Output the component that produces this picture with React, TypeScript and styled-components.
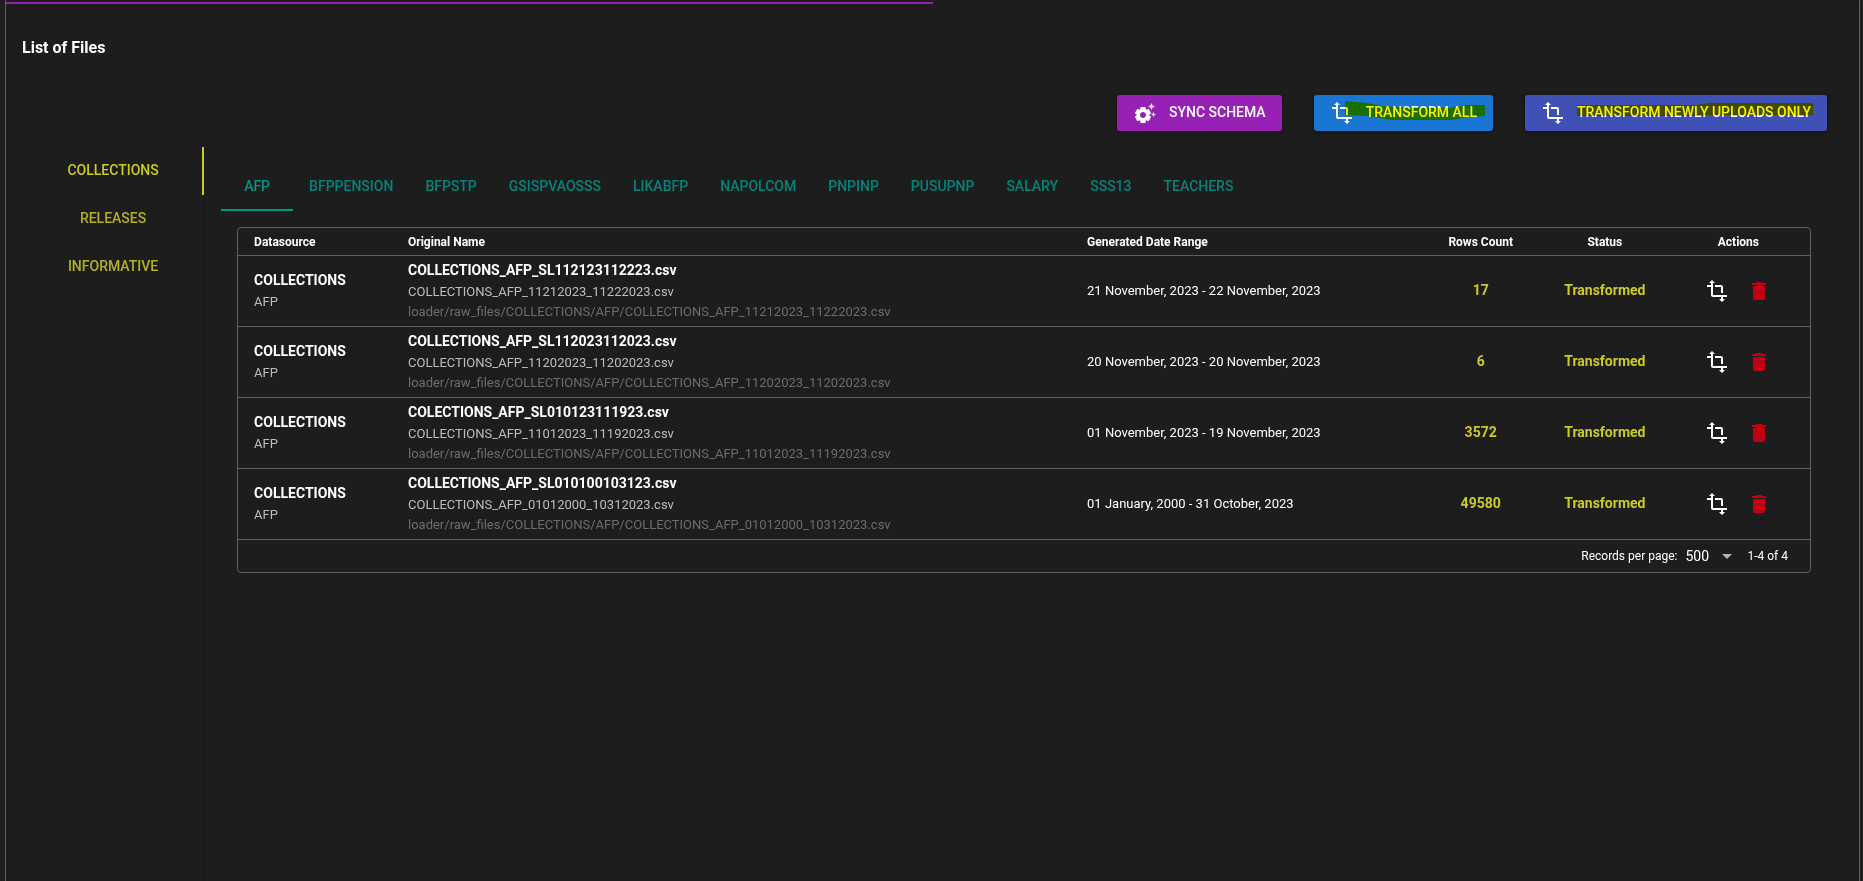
import React, { useState } from 'react';
import styled, { createGlobalStyle, css } from 'styled-components';
import { MdArrowDropDown, MdDelete, MdSettingsSuggest, MdTransform } from 'react-icons/md';

const line = '#5e5e5e';
const lime = '#cbcb22';
const teal = '#009688';

const GlobalStyle = createGlobalStyle`
  *, *::before, *::after { box-sizing: border-box; }
  body {
    margin: 0;
    background: #202020;
    color: #fff;
    font-family: Roboto, 'Liberation Sans', sans-serif;
    font-size: 14px;
    line-height: 20px;
  }
  button, select { font: inherit; color: inherit; background: none; border: 0; margin: 0; padding: 0; cursor: pointer; }
`;

const Card = styled.main`
  display: flex;
  flex-direction: column;
  min-height: 100vh;
  margin: 0 3px 0 5px;
  padding-top: 2px;
  background: #1d1d1d;
  border: solid ${line};
  border-width: 0 1px;
`;

const Progress = styled.div`
  height: 2px;
  background: #1a1a1a;
`;

const ProgressFill = styled.div`
  width: 50%;
  height: 2px;
  background: #9720b5;
`;

const Title = styled.h1`
  margin: 32px 16px 0;
  font-size: 16px;
  line-height: 24px;
  font-weight: 700;
`;

const Toolbar = styled.div`
  display: flex;
  flex-wrap: wrap;
  justify-content: flex-end;
  gap: 16px 32px;
  padding: 35px 32px 16px;
`;

const ToolButton = styled.button<{ $color: string }>`
  display: inline-flex;
  align-items: center;
  gap: 12px;
  height: 36px;
  padding: 0 16px;
  border-radius: 3px;
  background: ${p => p.$color};
  font-weight: 500;
  text-transform: uppercase;
  box-shadow: 0 1px 4px rgba(0, 0, 0, 0.4);
  svg { flex: none; }
`;

const ButtonLabel = styled.span`
  position: relative;
  padding-bottom: 2px;
`;

const Marker = styled.svg`
  position: absolute;
  top: -1px;
  left: -24px;
  mix-blend-mode: multiply;
  pointer-events: none;
  fill: #ffef00;
`;

const Body = styled.div`
  flex: 1;
  display: flex;
  padding: 0 16px;
`;

const SideTabs = styled.nav`
  flex: 0 0 10%;
  border-right: 1px solid #191919;
  box-sizing: content-box;
`;

const tabBase = css<{ $active: boolean }>`
  height: 48px;
  font-weight: 500;
  text-transform: uppercase;
  opacity: ${p => (p.$active ? 1 : 0.85)};
`;

const SideTab = styled.button<{ $active: boolean }>`
  ${tabBase}
  display: block;
  width: 100%;
  padding-bottom: 2px;
  color: ${lime};
  box-shadow: ${p => (p.$active ? `inset -2px 0 ${lime}` : 'none')};
`;

const Panel = styled.section`
  flex: 1;
  min-width: 0;
  padding: 16px;
`;

const TopTabs = styled.nav`
  display: flex;
  overflow: hidden;
`;

const TopTab = styled.button<{ $active: boolean }>`
  ${tabBase}
  min-width: 72px;
  padding: 0 16px 2px;
  color: ${teal};
  box-shadow: ${p => (p.$active ? `inset 0 -2px ${teal}` : 'none')};
`;

const TableCard = styled.div`
  margin: 16px;
  border: 1px solid ${line};
  border-radius: 4px;
`;

const Table = styled.table`
  width: 100%;
  table-layout: fixed;
  border-collapse: separate;
  border-spacing: 0;
`;

const Col = styled.col<{ $width: number }>`
  width: ${p => p.$width}%;
`;

const cell = css<{ $center?: boolean }>`
  padding: 0 8px;
  border-bottom: 1px solid ${line};
  text-align: ${p => (p.$center ? 'center' : 'left')};
  &:first-child { padding-left: 16px; }
  &:last-child { padding-right: 16px; }
`;

const Th = styled.th<{ $center?: boolean }>`
  ${cell}
  height: 28px;
  font-size: 12px;
  font-weight: 700;
`;

const Td = styled.td<{ $center?: boolean }>`
  ${cell}
  height: 71px;
`;

const Strong = styled.div`
  padding-bottom: 2px;
  font-weight: 700;
`;

const Caption = styled.div<{ $dim?: boolean }>`
  font-size: 13px;
  color: ${p => (p.$dim ? '#6c6c6c' : '#bdbdbd')};
`;

const DateRange = styled.div`
  font-size: 13px;
`;

const Value = styled.div`
  padding-bottom: 2px;
  color: ${lime};
  font-weight: 700;
`;

const Actions = styled.div`
  display: flex;
  justify-content: center;
  gap: 8px;
`;

const IconButton = styled.button<{ $danger?: boolean }>`
  display: grid;
  place-items: center;
  width: 34px;
  height: 34px;
  color: ${p => (p.$danger ? '#c10015' : '#fff')};
`;

const Footer = styled.div`
  display: flex;
  align-items: center;
  justify-content: flex-end;
  height: 32px;
  padding-right: 22px;
  font-size: 12px;
`;

const SelectWrap = styled.span`
  display: inline-grid;
  grid-template-columns: 30px 24px;
  align-items: center;
  margin: 0 8px;
  svg { grid-area: 1 / 2; color: #b4b4b4; pointer-events: none; }
`;

const Select = styled.select`
  grid-area: 1 / 1 / 2 / 3;
  appearance: none;
  width: 100%;
  font-size: 14px;
  option { background: #1d1d1d; }
`;

const sideTabs = ['Collections', 'Releases', 'Informative'];

const topTabs = [
  'AFP', 'BFPPENSION', 'BFPSTP', 'GSISPVAOSSS', 'LIKABFP', 'NAPOLCOM',
  'PNPINP', 'PUSUPNP', 'SALARY', 'SSS13', 'TEACHERS',
];

const files = [
  { name: 'COLLECTIONS_AFP_SL112123112223.csv', file: 'COLLECTIONS_AFP_11212023_11222023.csv', range: '21 November, 2023 - 22 November, 2023', rows: 17 },
  { name: 'COLLECTIONS_AFP_SL112023112023.csv', file: 'COLLECTIONS_AFP_11202023_11202023.csv', range: '20 November, 2023 - 20 November, 2023', rows: 6 },
  { name: 'COLECTIONS_AFP_SL010123111923.csv', file: 'COLLECTIONS_AFP_11012023_11192023.csv', range: '01 November, 2023 - 19 November, 2023', rows: 3572 },
  { name: 'COLLECTIONS_AFP_SL010100103123.csv', file: 'COLLECTIONS_AFP_01012000_10312023.csv', range: '01 January, 2000 - 31 October, 2023', rows: 49580 },
];

export default function App() {
  const [side, setSide] = useState(0);
  const [top, setTop] = useState(0);

  return (
    <>
      <GlobalStyle />
      <Card>
        <Progress><ProgressFill /></Progress>
        <Title>List of Files</Title>
        <Toolbar>
          <ToolButton $color="#9720b5">
            <MdSettingsSuggest size={24} />
            <ButtonLabel>Sync Schema</ButtonLabel>
          </ToolButton>
          <ToolButton $color="#1976d2">
            <MdTransform size={24} />
            <ButtonLabel>
              Transform All
              <Marker width="144" height="24" aria-hidden="true">
                <path d="M3 0 L25 2 L41 5 L78 7 H108 L125 4 H143 V15 L125 16 L111 19 H50 L25 15 L3 14 Z" />
              </Marker>
            </ButtonLabel>
          </ToolButton>
          <ToolButton $color="#3f51b5">
            <MdTransform size={24} />
            <ButtonLabel>
              Transform newly uploads only
              <Marker width="262" height="24" aria-hidden="true">
                <path d="M24 4 H144 L156 2 H260 V14 H156 L144 15 H24 Z" />
              </Marker>
            </ButtonLabel>
          </ToolButton>
        </Toolbar>
        <Body>
          <SideTabs aria-label="File groups">
            {sideTabs.map((tab, i) => (
              <SideTab key={tab} $active={i === side} onClick={() => setSide(i)}>{tab}</SideTab>
            ))}
          </SideTabs>
          <Panel>
            <TopTabs aria-label="Datasources">
              {topTabs.map((tab, i) => (
                <TopTab key={tab} $active={i === top} onClick={() => setTop(i)}>{tab}</TopTab>
              ))}
            </TopTabs>
            <TableCard>
              <Table>
                <colgroup>
                  <Col $width={10.3} />
                  <Col $width={43.2} />
                  <Col $width={22.1} />
                  <Col $width={6.9} />
                  <Col $width={8.9} />
                  <Col $width={8.6} />
                </colgroup>
                <thead>
                  <tr>
                    <Th>Datasource</Th>
                    <Th>Original Name</Th>
                    <Th>Generated Date Range</Th>
                    <Th $center>Rows Count</Th>
                    <Th $center>Status</Th>
                    <Th $center>Actions</Th>
                  </tr>
                </thead>
                <tbody>
                  {files.map(f => (
                    <tr key={f.file}>
                      <Td>
                        <Strong>COLLECTIONS</Strong>
                        <Caption>AFP</Caption>
                      </Td>
                      <Td>
                        <Strong>{f.name}</Strong>
                        <Caption>{f.file}</Caption>
                        <Caption $dim>{`loader/raw_files/COLLECTIONS/AFP/${f.file}`}</Caption>
                      </Td>
                      <Td><DateRange>{f.range}</DateRange></Td>
                      <Td $center><Value>{f.rows}</Value></Td>
                      <Td $center><Value>Transformed</Value></Td>
                      <Td $center>
                        <Actions>
                          <IconButton aria-label="Transform file"><MdTransform size={24} /></IconButton>
                          <IconButton $danger aria-label="Delete file"><MdDelete size={24} /></IconButton>
                        </Actions>
                      </Td>
                    </tr>
                  ))}
                </tbody>
              </Table>
              <Footer>
                <label htmlFor="page-size">Records per page:</label>
                <SelectWrap>
                  <Select id="page-size" defaultValue="500">
                    <option>100</option>
                    <option>500</option>
                  </Select>
                  <MdArrowDropDown size={24} />
                </SelectWrap>
                <span>1-4 of 4</span>
              </Footer>
            </TableCard>
          </Panel>
        </Body>
      </Card>
    </>
  );
}
